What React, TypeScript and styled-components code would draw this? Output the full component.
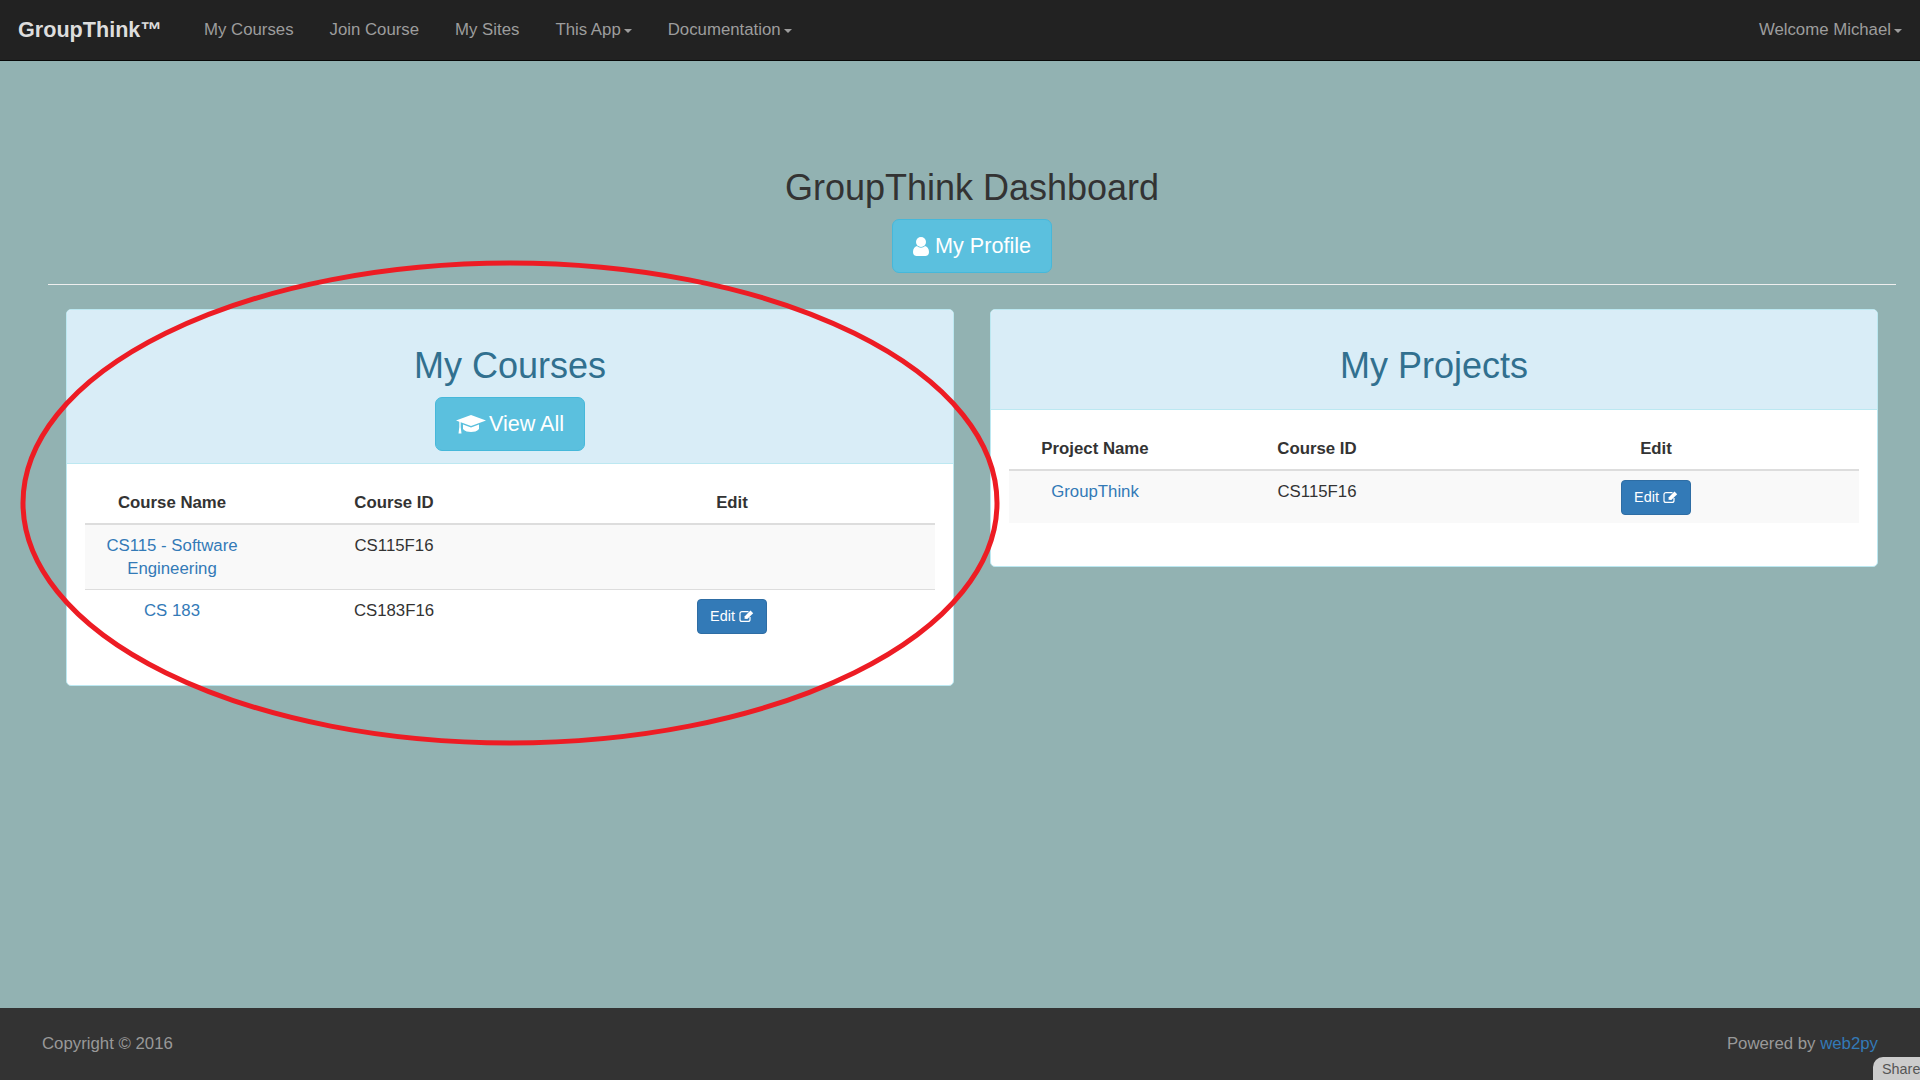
import styled, { createGlobalStyle } from "styled-components";

interface Row {
  name: string;
  courseId: string;
  editable: boolean;
}

const courses: Row[] = [
  { name: "CS115 - Software Engineering", courseId: "CS115F16", editable: false },
  { name: "CS 183", courseId: "CS183F16", editable: true },
];

const projects: Row[] = [
  { name: "GroupThink", courseId: "CS115F16", editable: true },
];

function UserIcon() {
  return (
    <svg width="16" height="19" viewBox="0 0 16 19" fill="#fff">
      <circle cx="8" cy="5" r="5" />
      <path d="M0 15C0 11.5 1.6 9.6 4 9C5.2 10.2 6.5 10.7 8 10.7C9.5 10.7 10.8 10.2 12 9C14.4 9.6 16 11.5 16 15C16 17.5 14.5 19 12.5 19H3.5C1.5 19 0 17.5 0 15Z" />
    </svg>
  );
}

function CapIcon() {
  return (
    <svg width="30" height="19" viewBox="0 0 30 19" fill="#fff">
      <path d="M0 5.5L15 0L30 5.5L15 11Z" />
      <path d="M7 9.5L15 12.5L23 9.5V14C21 16.4 18 17 15 17C12 17 9 16.4 7 14Z" />
      <path d="M3.3 6H4.7V12L5.5 18.5H2.5L3.3 12Z" />
    </svg>
  );
}

function EditIcon() {
  return (
    <svg width="15" height="12" viewBox="0 0 15 12">
      <path
        d="M9.5 1.6H3A2 2 0 0 0 1 3.6V9.4A2 2 0 0 0 3 11.4H9A2 2 0 0 0 11 9.4V7"
        fill="none"
        stroke="#fff"
        strokeWidth="1.2"
      />
      <path d="M5.5 8.8L5.8 6.2L11.5 0.6L14.2 3.2L8.3 9Z" fill="#fff" />
    </svg>
  );
}

function DataTable(props: {
  nameLabel: string;
  nameWidth: number;
  idWidth: number;
  rows: Row[];
}) {
  return (
    <Table>
      <colgroup>
        <col style={{ width: props.nameWidth }} />
        <col style={{ width: props.idWidth }} />
        <col />
      </colgroup>
      <thead>
        <tr>
          <HeadCell>{props.nameLabel}</HeadCell>
          <HeadCell>Course ID</HeadCell>
          <HeadCell>Edit</HeadCell>
        </tr>
      </thead>
      <tbody>
        {props.rows.map((row) => (
          <BodyRow key={row.name}>
            <Cell>
              <TextLink href="#">{row.name}</TextLink>
            </Cell>
            <Cell>{row.courseId}</Cell>
            <Cell>
              {row.editable && (
                <EditButton>
                  Edit <EditIcon />
                </EditButton>
              )}
            </Cell>
          </BodyRow>
        ))}
      </tbody>
    </Table>
  );
}

export default function App() {
  return (
    <Page>
      <GlobalStyle />
      <Navbar>
        <Brand href="#">GroupThink™</Brand>
        <NavList>
          <NavLink href="#">My Courses</NavLink>
          <NavLink href="#">Join Course</NavLink>
          <NavLink href="#">My Sites</NavLink>
          <NavLink href="#">
            This App<Caret />
          </NavLink>
          <NavLink href="#">
            Documentation<Caret />
          </NavLink>
        </NavList>
        <NavLink href="#">
          Welcome Michael<Caret />
        </NavLink>
      </Navbar>

      <Main>
        <PageTitle>GroupThink Dashboard</PageTitle>
        <Centered>
          <InfoButton $gap={6}>
            <UserIcon /> My Profile
          </InfoButton>
        </Centered>
        <Rule />
        <Columns>
          <Panel>
            <PanelHeader>
              <PanelTitle>My Courses</PanelTitle>
              <InfoButton $gap={3}>
                <CapIcon /> View All
              </InfoButton>
            </PanelHeader>
            <PanelBody>
              <DataTable
                nameLabel="Course Name"
                nameWidth={174}
                idWidth={270}
                rows={courses}
              />
            </PanelBody>
          </Panel>
          <Panel>
            <PanelHeader>
              <PanelTitle>My Projects</PanelTitle>
            </PanelHeader>
            <PanelBody>
              <DataTable
                nameLabel="Project Name"
                nameWidth={172}
                idWidth={272}
                rows={projects}
              />
            </PanelBody>
          </Panel>
        </Columns>
      </Main>

      <Footer>
        <span>Copyright © 2016</span>
        <span>
          Powered by <TextLink href="#">web2py</TextLink>
        </span>
      </Footer>

      <Annotation viewBox="0 0 1020 500" aria-hidden="true">
        <ellipse
          cx="510"
          cy="250"
          rx="487"
          ry="240"
          fill="none"
          stroke="#ed1c24"
          strokeWidth="5"
        />
      </Annotation>
      <ShareTab>Share</ShareTab>
    </Page>
  );
}

const GlobalStyle = createGlobalStyle`
  * {
    box-sizing: border-box;
  }
  body {
    margin: 0;
    background: #92b2b2;
    color: #333;
    font-family: "Liberation Sans", Arial, sans-serif;
    font-size: 16.8px;
    line-height: 23.5px;
  }
`;

const Page = styled.div`
  position: relative;
  display: flex;
  flex-direction: column;
  height: 1080px;
  overflow: hidden;
`;

const Navbar = styled.nav`
  display: flex;
  align-items: center;
  height: 61px;
  background: #222;
  border-bottom: 1px solid #080808;
`;

const Brand = styled.a`
  width: 186px;
  padding-left: 18px;
  color: #ddd;
  font-size: 21.6px;
  font-weight: 700;
  text-decoration: none;
`;

const NavList = styled.div`
  display: flex;
  flex: 1;
`;

const NavLink = styled.a`
  padding: 0 18px;
  color: #9d9d9d;
  text-decoration: none;
`;

const Caret = styled.span`
  display: inline-block;
  margin-left: 3px;
  vertical-align: middle;
  border-top: 4px solid #9d9d9d;
  border-left: 4px solid transparent;
  border-right: 4px solid transparent;
`;

const Main = styled.main`
  flex: 1;
  padding: 107px 24px 0 48px;
`;

const PageTitle = styled.h1`
  margin: 0 0 11px;
  font-size: 36px;
  font-weight: 400;
  line-height: 40px;
  text-align: center;
`;

const Centered = styled.div`
  display: flex;
  justify-content: center;
`;

const InfoButton = styled.button<{ $gap: number }>`
  display: inline-flex;
  align-items: center;
  justify-content: center;
  gap: ${(props) => props.$gap}px;
  height: 54px;
  padding: 0 20px;
  background: #5bc0de;
  border: 1px solid #46b8da;
  border-radius: 7px;
  color: #fff;
  font-family: inherit;
  font-size: 21.6px;
`;

const Rule = styled.hr`
  height: 1px;
  margin: 11px 0 24px;
  background: #eee;
  border: 0;
`;

const Columns = styled.div`
  display: flex;
  align-items: flex-start;
  gap: 36px;
  padding: 0 18px;
`;

const Panel = styled.section`
  flex: 1;
  background: #fff;
  border: 1px solid #bce8f1;
  border-radius: 5px;
  overflow: hidden;
`;

const PanelHeader = styled.header`
  padding: 36px 18px 12px;
  background: #d9edf7;
  border-bottom: 1px solid #bce8f1;
  text-align: center;
`;

const PanelTitle = styled.h2`
  margin: 0 0 11px;
  color: #31708f;
  font-size: 36px;
  font-weight: 400;
  line-height: 40px;
`;

const PanelBody = styled.div`
  padding: 20px 18px;
`;

const Table = styled.table`
  width: 100%;
  margin-bottom: 23px;
  border-collapse: collapse;
  table-layout: fixed;
  text-align: center;
`;

const HeadCell = styled.th`
  padding: 7px 10px 8px;
  border-bottom: 2px solid #ddd;
  font-weight: 700;
`;

const BodyRow = styled.tr`
  & + & {
    border-top: 1px solid #ddd;
  }
  &:nth-child(odd) {
    background: #f9f9f9;
  }
`;

const Cell = styled.td`
  padding: 9px 10px 8px;
  vertical-align: top;
`;

const TextLink = styled.a`
  color: #337ab7;
  text-decoration: none;
`;

const EditButton = styled.button`
  display: inline-flex;
  align-items: center;
  justify-content: center;
  gap: 4px;
  height: 35px;
  padding: 0 12px;
  background: #337ab7;
  border: 1px solid #2e6da4;
  border-radius: 4px;
  color: #fff;
  font-family: inherit;
  font-size: 14.4px;
  vertical-align: top;
`;

const Footer = styled.footer`
  display: flex;
  align-items: center;
  justify-content: space-between;
  height: 72px;
  padding: 0 42px;
  background: #333;
  color: #999;
`;

const Annotation = styled.svg`
  position: absolute;
  top: 253px;
  left: 0;
  width: 1020px;
  height: 500px;
  pointer-events: none;
`;

const ShareTab = styled.div`
  position: absolute;
  right: -8px;
  bottom: 0;
  width: 55px;
  height: 23px;
  padding-left: 9px;
  background: #ccc;
  border-radius: 10px 0 0 0;
  color: #555;
  font-size: 14.4px;
  line-height: 24px;
`;
